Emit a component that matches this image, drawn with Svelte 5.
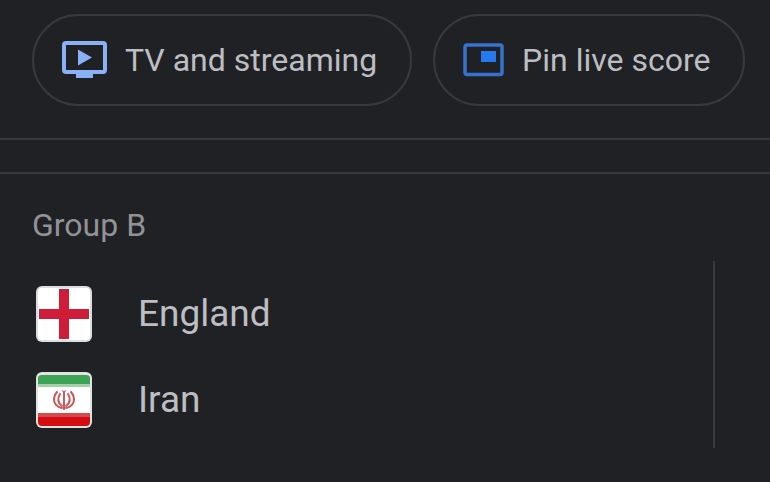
<script lang="ts">
	interface Team {
		name: string
		flag: 'england' | 'iran'
	}

	const group = 'Group B'
	const teams: Team[] = [
		{ name: 'England', flag: 'england' },
		{ name: 'Iran', flag: 'iran' },
	]
</script>

<main>
	<div class="actions">
		<button type="button">
			<svg width="45" height="38" viewBox="0 0 45 38" aria-hidden="true">
				<rect x="2" y="2" width="41" height="29" rx="2" fill="none" stroke="#8ab0f5" stroke-width="4" />
				<path d="M14 31h17v6h-17z" fill="#8ab0f5" />
				<path d="M16 8.500v16l14-8z" fill="#8ab0f5" />
			</svg>
			TV and streaming
		</button>
		<button type="button">
			<svg width="41" height="34" viewBox="0 0 41 34" aria-hidden="true">
				<rect x="2" y="2" width="37" height="29.500" rx="2" fill="none" stroke="#3673cf" stroke-width="3.500" />
				<path d="M18 8h15v11h-15z" fill="#2579ee" />
			</svg>
			Pin live score
		</button>
	</div>

	<section>
		<h2>{group}</h2>
		<div class="match">
			<ul>
				{#each teams as team (team.name)}
					<li>
						<svg class="flag" width="56" height="56" viewBox="0 0 56 56" aria-hidden="true">
							{#if team.flag === 'england'}
								<rect width="56" height="56" rx="6" fill="#dcdde0" />
								<rect x="2" y="2" width="52" height="52" rx="4" fill="#fff" />
								<path d="M23 3h10v20h20v10h-20v20h-10v-20h-20v-10h20z" fill="#cf1c38" />
							{:else}
								<rect width="56" height="56" rx="6" fill="#e4e1e1" />
								<path d="M2 15h52v26h-52z" fill="#fff" />
								<path d="M2 12v-6q0-3 4-3h44q4 0 4 3v6z" fill="#3da457" />
								<path d="M2 12h52v3h-52z" fill="#a5cfab" />
								<path d="M2 41h52v4h-52z" fill="#d64a4c" />
								<path d="M2 45h52v5q0 4-4 4h-44q-4 0-4-4z" fill="#d50d13" />
								<g fill="none" stroke="#d0565a" stroke-width="2" stroke-linecap="round">
									<path d="M28 20v17" />
									<path d="M21 20c-5 6-4 14 5 16" />
									<path d="M35 20c5 6 4 14-5 16" />
									<path d="M24 22c-3 5-2 9 2 12" />
									<path d="M32 22c3 5 2 9-2 12" />
									<path d="M26 19q2 1 4 0" stroke-width="1" />
								</g>
							{/if}
						</svg>
						{team.name}
					</li>
				{/each}
			</ul>
		</div>
	</section>
</main>

<style>
	:global(body) {
		margin: 0;
		background: #202125;
	}
	main {
		background: #202125;
		color: #bdbec2;
		font-family: Roboto, sans-serif;
		font-size: 32px;
		line-height: 40px;
	}
	.actions {
		display: flex;
		gap: 21px;
		padding: 14px 24px 32px 32px;
		border-bottom: 2px solid #38393d;
	}
	button {
		display: flex;
		align-items: center;
		gap: 18px;
		padding: 24px 33px 24px 28px;
		border: 2px solid #38393d;
		border-radius: 46px;
		background: none;
		color: inherit;
		font: inherit;
		white-space: nowrap;
		cursor: pointer;
	}
	button svg {
		flex: none;
	}
	section {
		margin-top: 32px;
		padding: 31px 32px;
		border-top: 2px solid #38393d;
	}
	h2 {
		margin: 0;
		color: #929397;
		font-size: 32px;
		font-weight: 400;
	}
	.match {
		margin: 16px 23px 0 0;
		border-right: 2px solid #38393d;
	}
	ul {
		display: flex;
		flex-direction: column;
		gap: 30px;
		margin: 0;
		padding: 25px 4px 20px;
		list-style: none;
	}
	li {
		display: flex;
		align-items: center;
		gap: 46px;
		font-size: 37px;
	}
</style>
